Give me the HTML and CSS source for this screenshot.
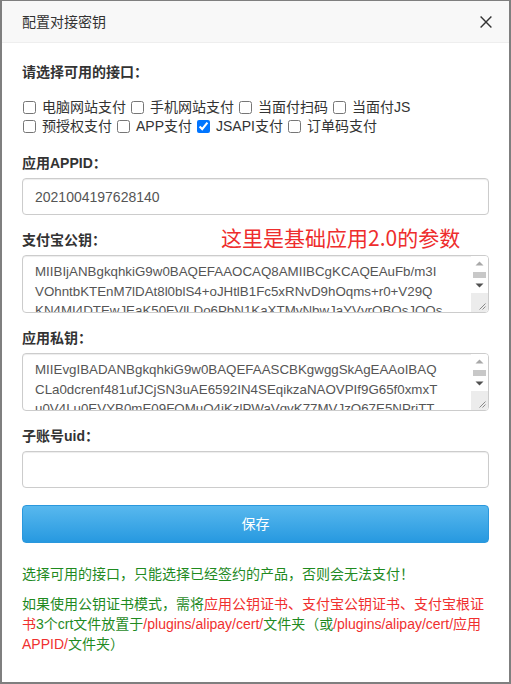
FILE: index.html
```html
<!DOCTYPE html>
<html lang="zh-CN">
<head>
<meta charset="utf-8">
<title>配置对接密钥</title>
<link rel="stylesheet" href="styles.css">
</head>
<body>
<div class="dialog">
  <div class="dialog-header">
    <span class="dialog-title">配置对接密钥</span>
    <button class="close" type="button" aria-label="关闭">
      <svg width="12" height="12" viewBox="0 0 12 12"><path d="M0.6 0.6L11.4 11.4M11.4 0.6L0.6 11.4" stroke="#333" stroke-width="1.4" fill="none"/></svg>
    </button>
  </div>
  <form class="dialog-body">
    <div class="group group-checks">
      <label class="label">请选择可用的接口：</label>
      <div class="checks">
        <label class="check"><input type="checkbox">电脑网站支付</label>
        <label class="check"><input type="checkbox">手机网站支付</label>
        <label class="check"><input type="checkbox">当面付扫码</label>
        <label class="check"><input type="checkbox">当面付JS</label>
        <label class="check"><input type="checkbox">预授权支付</label>
        <label class="check"><input type="checkbox">APP支付</label>
        <label class="check"><input type="checkbox" checked>JSAPI支付</label>
        <label class="check"><input type="checkbox">订单码支付</label>
      </div>
    </div>
    <div class="group">
      <label class="label">应用APPID：</label>
      <input class="control" type="text" value="2021004197628140">
    </div>
    <div class="group group-note">
      <label class="label">支付宝公钥：</label>
      <span class="note">这里是基础应用2.0的参数</span>
      <div class="area-wrap">
        <textarea class="control area">MIIBIjANBgkqhkiG9w0BAQEFAAOCAQ8AMIIBCgKCAQEAuFb/m3I
VOhntbKTEnM7lDAt8l0blS4+oJHtlB1Fc5xRNvD9hOqms+r0+V29Q
KN4MI4DTEwJEaK50FVlLDo6PbN1KaXTMyNbwJaYVvrQBQsJQQs
x7Fq2LkPz9VbN3cR8wY1mT4hJ6eG0sU5aD2iK7oL9nQ3pW8rX
Zt5Ey2HcM1uA4vB6gN0jQ9sD3fW7kP2lR8oT5iY1eU4xC6zV
bN8mQ3wE7rT1yU5iO9pA2sD6fG0hJ4kL8zX3cV7bN1mQ5wE
9rT3yU7iO1pA5sD9fG3hJ7kL1zX6cV0bN4mQ8wE2rT6yU0iO
4pA8sD2fG6hJ0kL4zX9cV3bN7mQ1wIDAQAB</textarea>
        <div class="fake-scroll" aria-hidden="true">
          <span class="sb-btn"><svg width="9" height="5" viewBox="0 0 9 5"><path d="M0.5 4.5h8L4.5 0.5z" fill="#a8a8a8"/></svg></span>
          <span class="sb-track"><span class="sb-thumb"></span></span>
          <span class="sb-btn"><svg width="9" height="5" viewBox="0 0 9 5"><path d="M0.5 0.5h8L4.5 4.5z" fill="#505050"/></svg></span>
          <span class="sb-grip"><svg width="8" height="8" viewBox="0 0 8 8"><path d="M7.5 1.5L1.5 7.5M7.5 4.5L4.5 7.5" stroke="#8a8a8a" stroke-width="1"/></svg></span>
        </div>
      </div>
    </div>
    <div class="group">
      <label class="label">应用私钥：</label>
      <div class="area-wrap">
        <textarea class="control area">MIIEvgIBADANBgkqhkiG9w0BAQEFAASCBKgwggSkAgEAAoIBAQ
CLa0dcrenf481ufJCjSN3uAE6592IN4SEqikzaNAOVPIf9G65f0xmxT
u0V4Lu0EVYB0mE09FOMuO4iKzlPWaVqvK77MVJzQ67E5NPriTT
hG2kL9mN4pQ7rS1tU5vW8xY2zA6bC0dE3fG7hI1jK5lM9nO3
pQ6rS0tU4vW7xY1zA5bC9dE2fG6hI0jK4lM8nO2pQ5rS9tU3v
W6xY0zA4bC8dE1fG5hI9jK3lM7nO1pQ4rS8tU2vW5xY9zA3b
C7dE0fG4hI8jK2lM6nO0pQ3rS7tU1vW4xY8zA2bC6dE9fG3h
I7jK1lM5nO9pQ2rS6tU0vW3xY7zA1bC5dE8fG2hI6jK0lM4n
O8pQ1rS5tU9vW2xY6zA0bC4dE7fG1hI5jK9lM3nO7pQ0rS4t
U8vW1xY5zA9bC3dE6fG0hI4jK8lM2nO6pQ9rS3tU7vW0xY4z
A8bC2dE5fG9hI3jK7lM1nO5pQ8rS2tU6vW9xY3zA7bC1dE4f
G8hI2jK6lM0nO4pQ7rS1tU5vW8xY2zA6bC0dE3fG7hI1jK5l
M9nO3pQ6rS0tU4vW7xY1zA5bC9dE2fG6hI0jK4lM8nO2pQ5r</textarea>
        <div class="fake-scroll" aria-hidden="true">
          <span class="sb-btn"><svg width="9" height="5" viewBox="0 0 9 5"><path d="M0.5 4.5h8L4.5 0.5z" fill="#a8a8a8"/></svg></span>
          <span class="sb-track"><span class="sb-thumb"></span></span>
          <span class="sb-btn"><svg width="9" height="5" viewBox="0 0 9 5"><path d="M0.5 0.5h8L4.5 4.5z" fill="#505050"/></svg></span>
          <span class="sb-grip"><svg width="8" height="8" viewBox="0 0 8 8"><path d="M7.5 1.5L1.5 7.5M7.5 4.5L4.5 7.5" stroke="#8a8a8a" stroke-width="1"/></svg></span>
        </div>
      </div>
    </div>
    <div class="group group-last">
      <label class="label">子账号uid：</label>
      <input class="control" type="text" value="">
    </div>
    <button class="btn-save" type="button">保存</button>
    <p class="tip tip-green">选择可用的接口，只能选择已经签约的产品，否则会无法支付！</p>
    <p class="tip tip-second"><span class="g">如果使用公钥证书模式，需将</span><span class="r">应用公钥证书、支付宝公钥证书、支付宝根证</span><br><span class="r">书</span><span class="g">3个crt文件放置于</span><span class="r">/plugins/alipay/cert/</span><span class="g">文件夹（或</span><span class="r">/plugins/alipay/cert/应用</span><br><span class="r">APPID/</span><span class="g">文件夹）</span></p>
  </form>
</div>
</body>
</html>
```
FILE: styles.css
```css
* {
  box-sizing: border-box;
}

html, body {
  margin: 0;
  padding: 0;
}

body {
  background: #7f7f7f;
  font-family: "Liberation Sans", "Noto Sans CJK SC", sans-serif;
  font-size: 14px;
  line-height: 20px;
  color: #333;
}

.dialog {
  margin: 1px 2px 0 2px;
  height: 681px;
  background: #fff;
  display: flex;
  flex-direction: column;
}

.dialog-header {
  height: 42px;
  padding: 1px 17px 0 20px;
  background: #f8f8f8;
  border-bottom: 1px solid #eee;
  display: flex;
  align-items: center;
  justify-content: space-between;
  flex: none;
}

.dialog-title {
  font-size: 14px;
  color: #333;
}

.close {
  border: 0;
  background: transparent;
  padding: 0;
  width: 12px;
  height: 12px;
  display: flex;
  cursor: pointer;
}

.dialog-body {
  padding: 19px 20px 0 20px;
  margin: 0;
}

.group {
  margin-bottom: 15px;
}

.group-last {
  margin-bottom: 17px;
}

.group-note {
  position: relative;
}

.label {
  display: block;
  font-weight: bold;
  line-height: 20px;
  margin-bottom: 5px;
  color: #333;
}

.group-checks {
  margin-bottom: 17px;
}

.group-checks .label {
  margin-bottom: 16px;
}

.checks {
  display: flex;
  flex-wrap: wrap;
  column-gap: 4px;
}

.check {
  display: inline-flex;
  align-items: center;
  height: 19px;
  line-height: 19px;
  color: #333;
  cursor: pointer;
}

.check input {
  width: 13px;
  height: 13px;
  margin: 0 6px 0 1px;
}

.control {
  display: block;
  width: 100%;
  height: 37px;
  padding: 6px 12px;
  font-family: "Liberation Sans", "Noto Sans CJK SC", sans-serif;
  font-size: 14px;
  line-height: 20px;
  color: #555;
  background: #fff;
  border: 1px solid #ccc;
  border-radius: 4px;
  box-shadow: inset 0 1px 1px rgba(0, 0, 0, 0.075);
  outline: none;
}

.area-wrap {
  position: relative;
}

.area {
  height: 58px;
  padding: 6px 22px 6px 12px;
  font-size: 13.33px;
  line-height: 19.5px;
  resize: none;
  overflow: hidden;
}

.fake-scroll {
  position: absolute;
  top: 1px;
  right: 1px;
  bottom: 1px;
  width: 17px;
  display: flex;
  flex-direction: column;
  background: #fff;
  border-radius: 0 3px 3px 0;
  overflow: hidden;
}

.sb-btn {
  height: 15px;
  display: flex;
  align-items: center;
  justify-content: center;
  flex: none;
}

.sb-track {
  height: 7px;
  display: flex;
  align-items: center;
  justify-content: center;
  flex: none;
}

.sb-thumb {
  width: 13px;
  height: 6px;
  background: #c8c8c8;
}

.sb-grip {
  flex: 1;
  background: #ececec;
  display: flex;
  align-items: flex-end;
  justify-content: flex-end;
  padding: 0 2px 2px 0;
}

.sb-grip svg {
  display: block;
}

.note {
  position: absolute;
  left: 199px;
  top: -5px;
  font-family: "Noto Sans CJK SC", sans-serif;
  font-size: 21px;
  line-height: 24px;
  color: #ee2d2d;
  white-space: nowrap;
}

.btn-save {
  display: block;
  width: 100%;
  height: 38px;
  border: 1px solid #2a98dd;
  border-radius: 4px;
  background: linear-gradient(to bottom, #58b8ee 0%, #2799e0 100%);
  color: #fff;
  font-family: "Liberation Sans", "Noto Sans CJK SC", sans-serif;
  font-size: 14px;
  line-height: 20px;
  cursor: pointer;
}

.tip {
  margin: 0;
  line-height: 20px;
}

.tip-green {
  margin-top: 21px;
  color: #1f8a1f;
}

.tip-second {
  margin-top: 10px;
}

.g {
  color: #1f8a1f;
}

.r {
  color: #f0302f;
}
```
